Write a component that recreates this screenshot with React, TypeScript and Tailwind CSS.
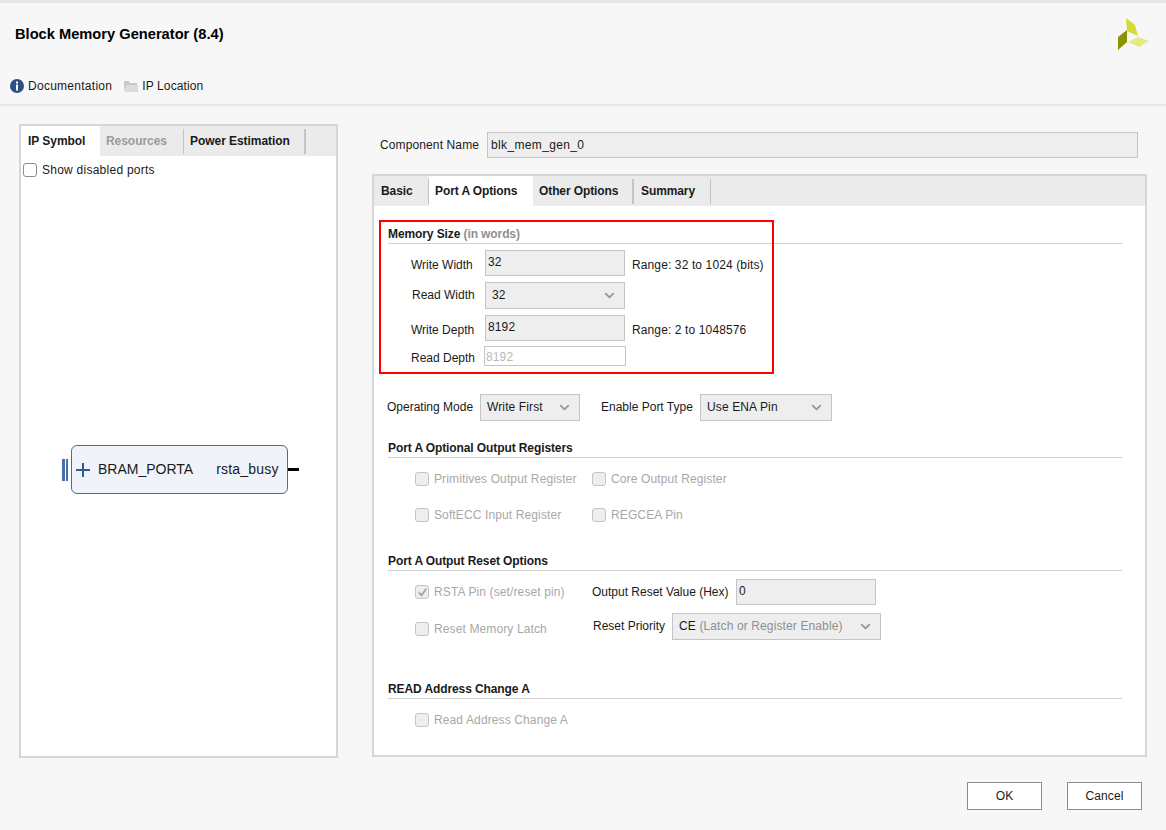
import type { ReactNode } from 'react'
import { ChevronDown } from 'lucide-react'

function Check({ label, checked, width }: { label: string; checked?: boolean; width?: string }) {
  return (
    <div className={`flex items-center gap-[5px] ${width ?? ''}`}>
      <span className="flex h-[14px] w-[14px] items-center justify-center rounded-[3px] border border-[#c4c4c4] bg-[#eeeeee]">
        {checked && (
          <svg viewBox="0 0 12 12" className="h-[11px] w-[11px]" fill="none" stroke="#a3a3a3" strokeWidth={2}>
            <path d="M2 6l3 3 5-7" />
          </svg>
        )}
      </span>
      <span className="text-[#a8a8a8]">{label}</span>
    </div>
  )
}

function Heading({ children }: { children: ReactNode }) {
  return (
    <div className="ml-[14px] mr-[23px] h-[17px] border-b border-[#cfcfcf] font-bold leading-[15px] tracking-[-0.1px] text-[#1a1a1a]">
      {children}
    </div>
  )
}

function Select({ value, width, muted }: { value: string; width: string; muted?: string }) {
  return (
    <div className={`flex h-[27px] items-center justify-between border border-[#c4c4c4] bg-[#eeeeee] pl-[6px] pr-[7px] ${width}`}>
      <span className="-mt-[2px] text-[#1a1a1a]">
        {value}
        {muted && <span className="text-[#8f8f8f]"> {muted}</span>}
      </span>
      <ChevronDown className="h-[15px] w-[15px] text-[#999999]" strokeWidth={3} />
    </div>
  )
}

function TextBox({ value, width }: { value: string; width: string }) {
  return (
    <div className={`flex h-[26px] items-center border border-[#c4c4c4] bg-[#eeeeee] pl-[2px] text-[#1a1a1a] ${width}`}>
      <span className="-mt-[2px]">{value}</span>
    </div>
  )
}

export default function App() {
  return (
    <div className="relative flex h-[830px] w-[1166px] flex-col overflow-hidden border-t-[3px] border-[#e6e6e6] bg-[#f7f7f7] font-['Liberation_Sans',Arial,sans-serif] text-[12px] tracking-[0.12px] text-[#1a1a1a]">
      {/* Header */}
      <div className="flex h-[65px] items-start justify-between pl-[15px] pr-[16px]">
        <h1 className="mt-[22px] text-[14.67px] font-bold leading-[18px] tracking-normal text-black">Block Memory Generator (8.4)</h1>
        <svg viewBox="0 0 34 36" className="mt-[13px] h-[36px] w-[34px]">
          <polygon points="10,2 19,9 22,20 11,15" fill="#d3dc32" />
          <polygon points="11,14 11,26 2,34 2,21" fill="#8e9100" />
          <polygon points="12,26 22,21 33,25 23,31" fill="#e3ea85" />
        </svg>
      </div>

      {/* Links */}
      <div className="flex h-[38px] items-start border-b-2 border-[#e6e6e6] pl-[10px] pt-[11px]">
        <div className="flex items-center gap-[4px]">
          <svg viewBox="0 0 14 14" className="h-[14px] w-[14px]">
            <circle cx="7" cy="7" r="7" fill="#2f4f87" />
            <rect x="6" y="2.5" width="2" height="2" fill="#fff" />
            <rect x="6" y="5.5" width="2" height="6" fill="#fff" />
          </svg>
          <span className="leading-[14px] tracking-[0.27px]">Documentation</span>
        </div>
        <div className="ml-[12px] flex items-center gap-[4px]">
          <svg viewBox="0 0 14 12" className="h-[12px] w-[14px]">
            <path d="M0 1h5l1 2h7v2H3L0 11z" fill="#c9c9c9" />
            <path d="M3 5h11v7H0.5z" fill="#dcdcdc" />
          </svg>
          <span className="leading-[14px]">IP Location</span>
        </div>
      </div>

      {/* Body */}
      <div className="mt-[18px] flex h-[634px] items-start pl-[19px]">
        {/* Left panel */}
        <div className="flex h-[634px] w-[319px] flex-col border-2 border-[#d6d6d6] bg-white">
          <div className="flex h-[30px] items-center bg-[#ebebeb] font-bold tracking-[-0.05px]">
            <div className="flex h-full w-[79px] items-center bg-white pl-[7px]">IP Symbol</div>
            <div className="flex h-[25px] w-[84px] items-center border-r border-[#c4c4c4] pl-[6px] text-[#9a9a9a]">Resources</div>
            <div className="flex h-[25px] w-[122px] items-center border-r-2 border-[#c4c4c4] pl-[6px]">Power Estimation</div>
          </div>
          <div className="flex h-[27px] items-center gap-[5px] pl-[2px]">
            <span className="h-[14px] w-[14px] rounded-[3px] border border-[#8c8c8c] bg-white" />
            <span className="tracking-[0.25px]">Show disabled ports</span>
          </div>
          {/* Symbol */}
          <div className="ml-[41px] mt-[262px] flex items-center">
            <div className="flex h-[22px] gap-[1px]">
              <span className="w-[2.5px] bg-[#4a71a8]" />
              <span className="w-[2.5px] bg-[#4a71a8]" />
            </div>
            <div className="ml-[3px] flex h-[49px] w-[217px] items-center rounded-[6px] border border-[#4a6ba0] bg-[#f0f4fa] text-[14px] leading-[18px] tracking-normal text-[#1a1a1a]">
              <svg viewBox="0 0 14 14" className="ml-[4px] h-[14px] w-[14px]" stroke="#315a93" strokeWidth={2}>
                <path d="M0 7h14M7 0v14" />
              </svg>
              <span className="-mt-[2px] ml-[8px]">BRAM_PORTA</span>
              <span className="-mt-[2px] ml-[23px] tracking-[0.2px]">rsta_busy</span>
            </div>
            <span className="h-[3px] w-[11px] bg-black" />
          </div>
        </div>

        {/* Right side */}
        <div className="ml-[34px] flex w-[775px] flex-col">
          <div className="ml-[8px] mt-[8px] flex h-[26px] items-center">
            <span className="w-[107px]">Component Name</span>
            <div className="flex h-[26px] w-[651px] items-center border border-[#c4c4c4] bg-[#eeeeee] pl-[3px] tracking-[0.35px]">blk_mem_gen_0</div>
          </div>

          <div className="mt-[16px] flex h-[583px] w-[775px] flex-col border-2 border-[#d6d6d6] bg-white">
            {/* Tabs */}
            <div className="flex h-[30px] shrink-0 items-center bg-[#ebebeb] font-bold tracking-[-0.1px]">
              <div className="flex h-[25px] w-[55px] items-center border-r border-[#c4c4c4] pl-[7px]">Basic</div>
              <div className="flex h-full w-[104px] items-center bg-white pl-[6px]">Port A Options</div>
              <div className="flex h-[25px] w-[101px] items-center border-r-2 border-[#c4c4c4] pl-[6px]">Other Options</div>
              <div className="flex h-[25px] w-[77px] items-center border-r border-[#c4c4c4] pl-[7px]">Summary</div>
            </div>

            {/* Memory Size */}
            <div className="mt-[21px]">
              <Heading>
                Memory Size <span className="text-[#8f8f8f]">(in words)</span>
              </Heading>
            </div>
            <div className="ml-[37px] mt-[6px] flex h-[26px] items-center">
              <span className="mt-[4px] w-[74px] tracking-normal">Write Width</span>
              <TextBox value="32" width="w-[140px]" />
              <span className="ml-[7px] mt-[4px]">Range: 32 to 1024 (bits)</span>
            </div>
            <div className="ml-[38px] mt-[6px] flex h-[27px] items-center">
              <span className="-mt-[2px] w-[73px] tracking-normal">Read Width</span>
              <Select value="32" width="w-[140px]" />
            </div>
            <div className="ml-[37px] mt-[6px] flex h-[26px] items-center">
              <span className="mt-[4px] w-[74px] tracking-normal">Write Depth</span>
              <TextBox value="8192" width="w-[140px]" />
              <span className="ml-[7px] mt-[4px]">Range: 2 to 1048576</span>
            </div>
            <div className="ml-[37px] mt-[5px] flex h-[20px] items-center">
              <span className="mt-[3px] w-[73px] tracking-normal">Read Depth</span>
              <div className="flex h-[20px] w-[142px] items-center border border-[#c4c4c4] bg-white pl-[1px] pt-[2px] text-[#b8b8b8]">8192</div>
            </div>

            {/* Modes */}
            <div className="ml-[13px] mt-[28px] flex h-[27px] items-center">
              <span className="-mt-[2px] w-[93px] tracking-normal">Operating Mode</span>
              <Select value="Write First" width="w-[100px]" />
              <span className="-mt-[2px] ml-[21px] w-[99px] tracking-normal">Enable Port Type</span>
              <Select value="Use ENA Pin" width="w-[132px]" />
            </div>

            <div className="mt-[20px]">
              <Heading>Port A Optional Output Registers</Heading>
            </div>
            <div className="ml-[41px] mt-[13px] flex h-[15px] items-center">
              <Check label="Primitives Output Register" width="w-[177px]" />
              <Check label="Core Output Register" />
            </div>
            <div className="ml-[41px] mt-[21px] flex h-[15px] items-center">
              <Check label="SoftECC Input Register" width="w-[177px]" />
              <Check label="REGCEA Pin" />
            </div>

            <div className="mt-[32px]">
              <Heading>Port A Output Reset Options</Heading>
            </div>
            <div className="ml-[41px] mt-[8px] flex h-[26px] items-center">
              <Check label="RSTA Pin (set/reset pin)" checked width="w-[177px]" />
              <span className="w-[144px] tracking-normal">Output Reset Value (Hex)</span>
              <TextBox value="0" width="w-[140px]" />
            </div>
            <div className="ml-[41px] mt-[8px] flex h-[27px] items-center">
              <Check label="Reset Memory Latch" width="mt-[4px] w-[178px]" />
              <span className="-mt-[2px] w-[79px] tracking-normal">Reset Priority</span>
              <Select value="CE" muted="(Latch or Register Enable)" width="w-[209px]" />
            </div>

            <div className="mt-[42px]">
              <Heading>READ Address Change A</Heading>
            </div>
            <div className="ml-[41px] mt-[13px] flex h-[15px] items-center">
              <Check label="Read Address Change A" />
            </div>
          </div>
        </div>
      </div>

      {/* Footer */}
      <div className="mt-[24px] flex justify-end gap-[25px] pr-[24px]">
        <button className="h-[28px] w-[75px] border border-[#8c8c8c] bg-white">OK</button>
        <button className="h-[28px] w-[75px] border border-[#8c8c8c] bg-white">Cancel</button>
      </div>

      {/* Highlight drawn over the screenshot */}
      <div className="pointer-events-none absolute left-[379px] top-[217px] h-[154px] w-[395px] border-2 border-[#ff0000]" />
    </div>
  )
}
